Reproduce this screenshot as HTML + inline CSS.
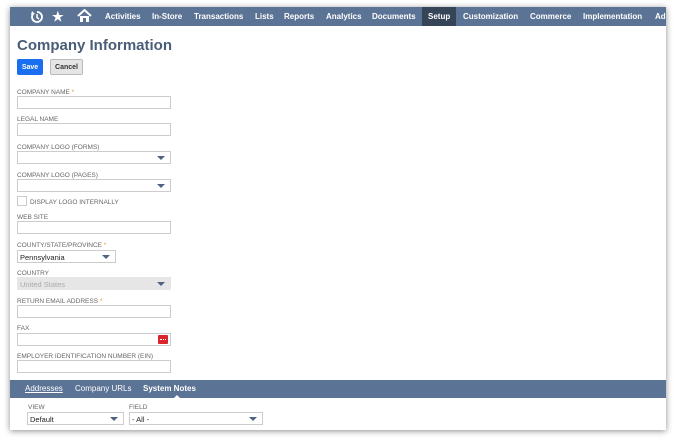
<!DOCTYPE html>
<html><head><style>
*{margin:0;padding:0;box-sizing:border-box}
body{width:675px;height:443px;background:#fff;font-family:"Liberation Sans",sans-serif;position:relative;overflow:hidden}
#win{position:absolute;left:10px;top:7px;width:656px;height:423px;background:#fff;box-shadow:0 1px 6px rgba(0,0,0,.45);overflow:hidden}
#nav{position:absolute;left:0;top:0;width:100%;height:19px;background:#5b7395}
.ni{position:absolute;top:0;height:19px;line-height:19px;color:#fff;font-size:8px;font-weight:bold;white-space:nowrap}
.a{position:absolute;font-size:6.5px;color:#666;white-space:nowrap}
.star{color:#e69a2a}
.in{position:absolute;height:13px;border:1px solid #ccc;background:#fff}
.dd::after{content:"";position:absolute;right:5px;top:4px;border-left:4px solid transparent;border-right:4px solid transparent;border-top:4px solid #4d6384}
.v{position:absolute;left:2px;top:2px;font-size:7.5px;line-height:9px;color:#222}
.btn{position:absolute;display:flex;align-items:center;justify-content:center;font-size:7px;font-weight:bold;border-radius:2px}
</style></head><body>
<div id="win">
<div id="nav">
<svg style="position:absolute;left:20px;top:3px" width="14" height="14" viewBox="0 0 14 14"><path d="M3 4 A5 5 0 1 0 7 2" fill="none" stroke="#fff" stroke-width="1.8"/><path d="M7 4 V7.5 L9 9" fill="none" stroke="#fff" stroke-width="1.5"/><path d="M2 1 L5 4 L1 5Z" fill="#fff"/></svg>
<div class="ni" style="left:42px;font-size:13px">★</div>
<svg style="position:absolute;left:67px;top:2px" width="15" height="14" viewBox="0 0 15 14"><path d="M1 7 L7.5 1 L14 7" fill="none" stroke="#fff" stroke-width="2"/><path d="M3 7 V13 H12 V7" fill="#fff"/><rect x="6" y="9" width="3" height="4" fill="#5b7395"/></svg>
<div class="ni" style="left:95px">Activities</div>
<div class="ni" style="left:142px">In-Store</div>
<div class="ni" style="left:184px">Transactions</div>
<div class="ni" style="left:245px">Lists</div>
<div class="ni" style="left:274px">Reports</div>
<div class="ni" style="left:316px">Analytics</div>
<div class="ni" style="left:362px">Documents</div>
<div class="ni" style="left:412px;width:34px;background:#364458;padding-left:6px">Setup</div>
<div class="ni" style="left:453px">Customization</div>
<div class="ni" style="left:520px">Commerce</div>
<div class="ni" style="left:573px">Implementation</div>
<div class="ni" style="left:645px">Ad</div>
</div>
<div style="position:absolute;left:7px;top:30px;font-size:15px;font-weight:bold;color:#4a5d78">Company Information</div>
<div class="btn" style="left:7px;top:52px;width:26px;height:16px;background:#1a6ff0;color:#fff">Save</div>
<div class="btn" style="left:40px;top:52px;width:33px;height:16px;background:#e5e5e5;border:1px solid #bbb;color:#333">Cancel</div>

<div class="a" style="left:7px;top:82px">COMPANY NAME <span class="star">*</span></div>
<div class="in" style="left:7px;top:89px;width:154px"></div>
<div class="a" style="left:7px;top:109px">LEGAL NAME</div>
<div class="in" style="left:7px;top:116px;width:154px"></div>
<div class="a" style="left:7px;top:137px">COMPANY LOGO (FORMS)</div>
<div class="in dd" style="left:7px;top:144px;width:154px"></div>
<div class="a" style="left:7px;top:165px">COMPANY LOGO (PAGES)</div>
<div class="in dd" style="left:7px;top:172px;width:154px"></div>
<div class="in" style="left:7px;top:189px;width:10px;height:10px"></div>
<div class="a" style="left:20px;top:192px">DISPLAY LOGO INTERNALLY</div>
<div class="a" style="left:7px;top:207px">WEB SITE</div>
<div class="in" style="left:7px;top:214px;width:154px"></div>
<div class="a" style="left:7px;top:235px">COUNTY/STATE/PROVINCE <span class="star">*</span></div>
<div class="in dd" style="left:7px;top:243px;width:99px"><span class="v">Pennsylvania</span></div>
<div class="a" style="left:7px;top:263px">COUNTRY</div>
<div class="in dd" style="left:7px;top:270px;width:154px;background:#e6e6e6;border-color:#e6e6e6"><span class="v" style="color:#aaa">United States</span></div>
<div class="a" style="left:7px;top:291px">RETURN EMAIL ADDRESS <span class="star">*</span></div>
<div class="in" style="left:7px;top:298px;width:154px"></div>
<div class="a" style="left:7px;top:318px">FAX</div>
<div class="in" style="left:7px;top:326px;width:154px"><div style="position:absolute;right:2px;top:1px;width:10px;height:9px;background:#d9262c;border-radius:1px"><div style="position:absolute;left:2px;top:4px;width:6px;height:1px;border-top:1px dotted #fff"></div></div></div>
<div class="a" style="left:7px;top:346px">EMPLOYER IDENTIFICATION NUMBER (EIN)</div>
<div class="in" style="left:7px;top:353px;width:154px"></div>

<div style="position:absolute;left:0;top:373px;width:100%;height:18px;background:#5b7395">
<div class="ni" style="left:15px;height:18px;line-height:18px;font-weight:normal;text-decoration:underline">Addresses</div>
<div class="ni" style="left:65px;height:18px;line-height:18px;font-weight:normal">Company URLs</div>
<div class="ni" style="left:133px;height:18px;line-height:18px">System Notes</div>
<div style="position:absolute;left:164px;top:15px;border-left:3px solid transparent;border-right:3px solid transparent;border-bottom:3px solid #fff"></div>
</div>
<div class="a" style="left:18px;top:397px">VIEW</div>
<div class="in dd" style="left:17px;top:405px;width:97px"><span class="v">Default</span></div>
<div class="a" style="left:119px;top:397px">FIELD</div>
<div class="in dd" style="left:119px;top:405px;width:134px"><span class="v">- All -</span></div>
</div>
</body></html>
